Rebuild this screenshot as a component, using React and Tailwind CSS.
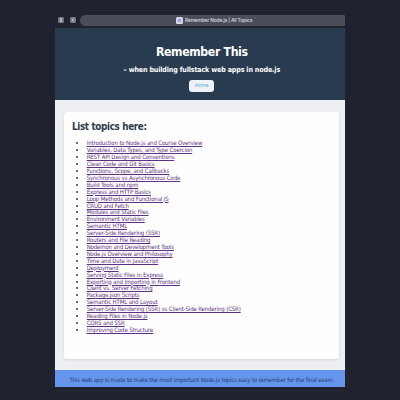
const topics = [
  "Introduction to Node.js and Course Overview",
  "Variables, Data Types, and Type Coercion",
  "REST API Design and Conventions",
  "Clean Code and Git Basics",
  "Functions, Scope, and Callbacks",
  "Synchronous vs Asynchronous Code",
  "Build Tools and npm",
  "Express and HTTP Basics",
  "Loop Methods and Functional JS",
  "CRUD and Fetch",
  "Modules and Static Files",
  "Environment Variables",
  "Semantic HTML",
  "Server-Side Rendering (SSR)",
  "Routers and File Reading",
  "Nodemon and Development Tools",
  "Node.js Overview and Philosophy",
  "Time and Date in JavaScript",
  "Deployment",
  "Serving Static Files in Express",
  "Exporting and Importing in Frontend",
  "Client vs. Server Fetching",
  "Package.json Scripts",
  "Semantic HTML and Layout",
  "Server-Side Rendering (SSR) vs Client-Side Rendering (CSR)",
  "Reading Files in Node.js",
  "CORS and SSR",
  "Improving Code Structure",
];

function BrowserBar() {
  return (
    <div className="flex h-[13px] shrink-0 items-start pl-[2.5px]">
      <div className="mt-[2px] flex size-[6px] items-center justify-center rounded-[1.5px] bg-[#777985]">
        <svg viewBox="0 0 6 6" className="size-[6px]" fill="none" stroke="#e2e3e8" strokeWidth="0.8">
          <path d="M2 1.7h2M2 3h2M2 4.3h2" />
        </svg>
      </div>
      <div className="mt-[2px] ml-[6px] flex size-[6px] items-center justify-center rounded-[1.5px] bg-[#777985]">
        <svg viewBox="0 0 6 6" className="size-[6px]" fill="none" stroke="#e2e3e8" strokeWidth="0.9">
          <path d="M3.8 1.5 2.2 3l1.6 1.5" />
        </svg>
      </div>
      <div className="ml-[4.5px] flex h-[11px] flex-1 items-center justify-center rounded-l-[5.5px] rounded-r-[1px] bg-[#4b4d59] pl-[4px]">
        <svg viewBox="0 0 7 7" className="mr-[1.5px] size-[7px] shrink-0">
          <rect width="7" height="7" rx="1.5" fill="#dddcf0" />
          <circle cx="3.5" cy="3.5" r="2.1" fill="#a69bdc" />
          <path d="M2.5 3.5l.8.8 1.4-1.5" fill="none" stroke="#dddcf0" strokeWidth="0.5" />
        </svg>
        <span className="font-['Inter',sans-serif] text-[4.9px] leading-none font-medium tracking-[-0.15px] whitespace-nowrap text-[#dcdde2]">
          Remember Node.js | All Topics
        </span>
      </div>
    </div>
  );
}

export default function App() {
  return (
    <div className="flex h-[400px] w-[400px] overflow-hidden bg-[#212230] pt-[15px] pl-[55px] font-['DejaVu_Sans_Condensed','DejaVu_Sans',sans-serif] [font-stretch:75%]">
      <div className="flex h-[371.5px] w-[289.6px] flex-col">
        <BrowserBar />
        <header className="flex h-[72px] shrink-0 flex-col items-center bg-[#293b4e] pt-[17px] pl-[4px] text-white">
          <h1 className="text-[12.2px] leading-[14px] font-bold tracking-[-0.34px] whitespace-nowrap">Remember This</h1>
          <h2 className="mt-[6px] text-[7.1px] leading-[9px] font-bold tracking-[-0.15px] whitespace-nowrap">
            – when building fullstack web apps in node.js
          </h2>
          <a className="mt-[5.5px] flex h-[12px] w-[25px] items-center justify-center rounded-[3px] bg-[#eef2f9] text-[5.2px] leading-none text-[#52a5d6]">
            Home
          </a>
        </header>
        <main className="flex-1 bg-[#eeeff4] pt-[12px] pr-[5.6px] pl-[9px]">
          <section className="h-[247px] rounded-[3px] bg-[#fefefe] pt-[8px] pl-[8px] shadow-[0_1px_3px_rgba(0,0,0,0.1)]">
            <h2 className="text-[9.8px] leading-[13px] font-bold tracking-[-0.34px] whitespace-nowrap text-[#2c3b4c]">
              List topics here:
            </h2>
            <ul className="mt-[7.4px] list-disc pl-[14.7px] text-[6px] leading-[6.914px] tracking-[-0.13px] text-[#2c3b4c]">
              {topics.map((topic) => (
                <li key={topic}>
                  <a className="whitespace-nowrap text-[#5c3182] underline decoration-[0.7px] underline-offset-[0.7px]">{topic}</a>
                </li>
              ))}
            </ul>
          </section>
        </main>
        <footer className="flex h-[16.5px] shrink-0 items-center justify-center bg-[#6495ed] pt-[2.5px] pl-[4px] text-[6px] leading-none tracking-[-0.145px] whitespace-nowrap text-[#28406a]">
          This web app is made to make the most important Node.js topics easy to remember for the final exam.
        </footer>
      </div>
    </div>
  );
}
